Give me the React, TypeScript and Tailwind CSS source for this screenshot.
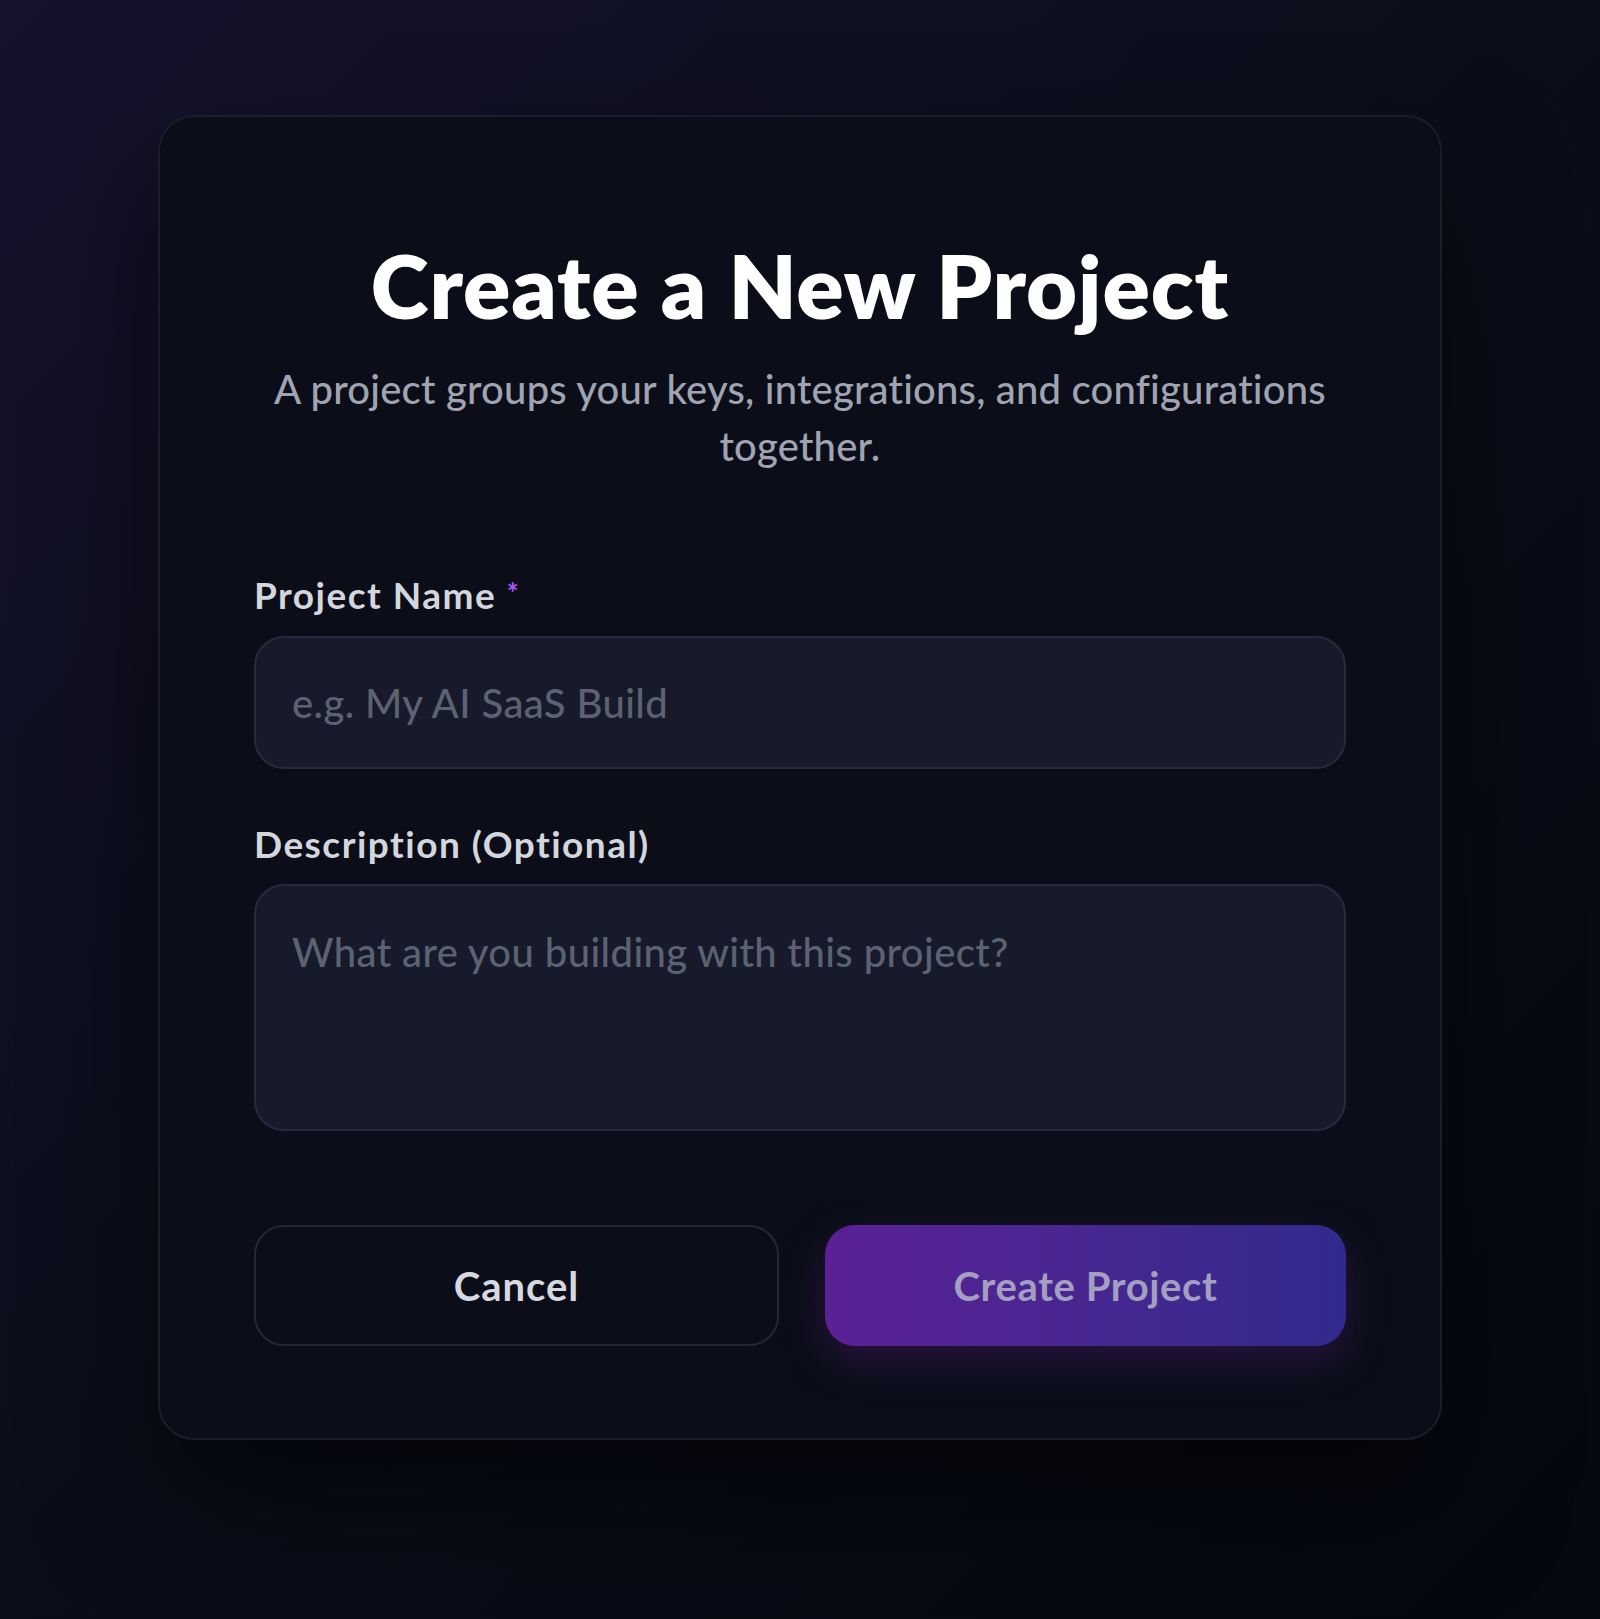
import React, { useState } from 'react';

const font = { fontFamily: 'Lato, "Noto Sans", sans-serif' };

export default function App() {
  const [name, setName] = useState('');
  const [description, setDescription] = useState('');

  return (
    <div
      className="min-h-[1619px] w-full bg-gradient-to-br from-[#15122c] via-[#0b0e1a] to-[#05080f] pt-[115px] flex justify-center"
      style={font}
    >
      <div className="w-[1284px] h-[1325px] rounded-[36px] border-2 border-[#1a1e2b] bg-[#0b0e18] px-[94px] pt-[118px] pb-[94px] shadow-[0_60px_120px_rgba(0,0,0,0.55)] flex flex-col">
        <h1 className="text-center text-white font-extrabold text-[88px] leading-[100px] tracking-[0.01em]">
          Create a New Project
        </h1>
        <p className="mx-auto mt-[26px] max-w-[1090px] text-center text-[#a0a4b2] font-medium text-[40px] leading-[57px] tracking-[0.005em]">
          A project groups your keys, integrations, and configurations together.
        </p>

        <div className="mt-[96px] flex flex-col">
          <label className="text-[#d4d6de] font-bold text-[37px] leading-[47px] tracking-[0.04em]">
            Project Name <span className="text-[#a855f7] text-[28px] relative -top-[6px]">*</span>
          </label>
          <input
            value={name}
            onChange={e => setName(e.target.value)}
            placeholder="e.g. My AI SaaS Build"
            className="mt-[14px] h-[133px] w-full rounded-[30px] border-2 border-[#262b3b] bg-[#161a2a] px-[36px] text-[40px] font-medium tracking-[0.01em] text-white placeholder:text-[#5c6272] outline-none"
            style={font}
          />

          <label className="mt-[51px] text-[#d4d6de] font-bold text-[37px] leading-[47px] tracking-[0.04em]">
            Description (Optional)
          </label>
          <textarea
            value={description}
            onChange={e => setDescription(e.target.value)}
            placeholder="What are you building with this project?"
            className="mt-[17px] h-[247px] w-full resize-none rounded-[30px] border-2 border-[#262b3b] bg-[#161a2a] px-[36px] py-[38px] text-[40px] font-medium tracking-[0.01em] leading-[57px] text-white placeholder:text-[#5c6272] outline-none"
            style={font}
          />
        </div>

        <div className="mt-[94px] flex gap-[46px]">
          <button className="flex-1 h-[121px] rounded-[30px] border-2 border-[#232836] bg-transparent text-[#d7d9e0] font-bold text-[40px] tracking-[0.025em]">
            Cancel
          </button>
          <button className="flex-1 h-[121px] rounded-[30px] bg-gradient-to-r from-[#5b2095] to-[#312a8c] text-[#a29fc0] font-bold text-[40px] tracking-[0.015em] shadow-[0_16px_40px_rgba(88,28,135,0.35)]">
            Create Project
          </button>
        </div>
      </div>
    </div>
  );
}
